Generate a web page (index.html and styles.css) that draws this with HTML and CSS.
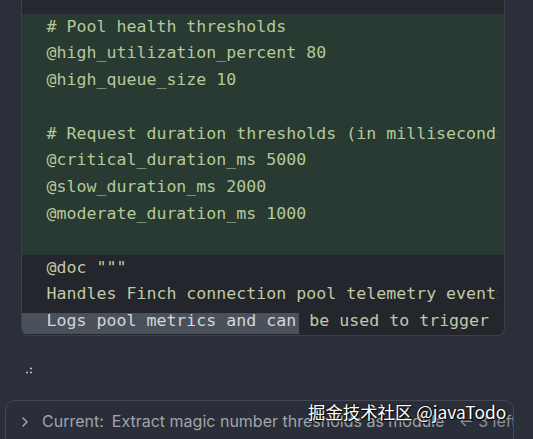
FILE: index.html
```html
<!DOCTYPE html>
<html>
<head>
<meta charset="utf-8">
<link rel="stylesheet" href="styles.css">
</head>
<body>
<div class="page">
  <div class="code">
    <div class="cut"></div>
    <div class="added">
      <div class="line"># Pool health thresholds</div>
      <div class="line">@high_utilization_percent 80</div>
      <div class="line">@high_queue_size 10</div>
      <div class="line"> </div>
      <div class="line"># Request duration thresholds (in milliseconds)</div>
      <div class="line">@critical_duration_ms 5000</div>
      <div class="line">@slow_duration_ms 2000</div>
      <div class="line">@moderate_duration_ms 1000</div>
      <div class="line"> </div>
    </div>
    <div class="context">
      <div class="line">@doc """</div>
      <div class="line">Handles Finch connection pool telemetry events.</div>
      <div class="line"><span class="sel">Logs pool metrics and can</span> be used to trigger alerts.</div>
    </div>
  </div>
  <div class="spinner">
    <svg width="10" height="8" viewBox="0 0 10 8"><circle cx="6" cy="1.5" r="1" fill="#c9ccd2"/><circle cx="2" cy="5.5" r="1" fill="#c9ccd2"/><circle cx="6" cy="5.5" r="1" fill="#c9ccd2"/></svg>
  </div>
  <div class="current">
    <svg class="chev" width="10" height="12" viewBox="0 0 10 12"><path d="M3 2 L7 6 L3 10" fill="none" stroke="#a3a8b1" stroke-width="1.5" stroke-linecap="round" stroke-linejoin="round"/></svg>
    <span class="label">Current:</span>
    <span class="task">Extract magic number thresholds as module</span>
    <span class="more">← 3 left</span>
  </div>
  <div class="watermark">掘金技术社区 @javaTodo</div>
</div>
</body>
</html>
```
FILE: styles.css
```css
html, body {
  margin: 0;
  padding: 0;
  background: #2b2f39;
}
.page {
  position: relative;
  width: 533px;
  height: 439px;
  overflow: hidden;
  background: #2b2f39;
}
.code {
  margin-left: 21px;
  width: 482px;
  border: 1.5px solid #3c404a;
  border-top: none;
  border-radius: 0 0 8px 8px;
  overflow: hidden;
  background: #23262d;
  font-family: "DejaVu Sans Mono", monospace;
  font-size: 16.6px;
  color: #c2c9a4;
}
.cut {
  height: 13.5px;
  background: #25282f;
}
.added {
  background: #283a32;
  color: #b6c99a;
  padding-right: 6px;
}
.context {
  padding-right: 6px;
}
.line {
  height: 26.8px;
  line-height: 26.8px;
  padding-left: 24.5px;
  white-space: pre;
  overflow: hidden;
}
.sel {
  background: #4b515b;
  color: #d3d6da;
  margin-left: -24.5px;
  padding-left: 24.5px;
  padding-right: 3px;
  display: inline-block;
  height: 21px;
  vertical-align: top;
  margin-top: 5px;
  line-height: 16px;
}
.spinner {
  margin: 31px 0 0 25px;
  height: 8px;
  line-height: 0;
}
.current {
  margin: 25px 0 0 5px;
  width: 509px;
  height: 60px;
  border: 1.5px solid #434853;
  border-radius: 10px;
  background: #2a2e38;
  display: flex;
  align-items: flex-start;
  padding-top: 10px;
  box-sizing: border-box;
  font-family: "Inter", "Noto Sans", sans-serif;
  font-size: 16px;
  color: #a0a5ae;
  white-space: nowrap;
  overflow: hidden;
}
.chev {
  margin: 5px 0 0 14px;
  flex: none;
}
.label {
  margin-left: 12px;
}
.task {
  margin-left: 8px;
}
.more {
  margin-left: 14px;
  color: #8d929b;
}
.watermark {
  position: absolute;
  left: 308px;
  top: 399px;
  font-family: "Noto Sans CJK SC", "Noto Sans", sans-serif;
  font-size: 17.4px;
  color: #ffffff;
  text-shadow: 0 0 2px #000, 1px 1px 1px #000;
  white-space: nowrap;
}
```
